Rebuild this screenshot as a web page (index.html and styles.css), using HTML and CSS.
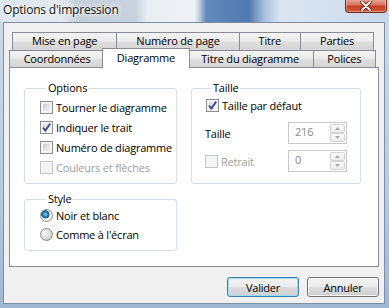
FILE: index.html
```html
<!DOCTYPE html>
<html lang="fr">
<head>
    <meta charset="UTF-8">
    <meta name="viewport" content="width=device-width, initial-scale=1.0">
    <title>Options d'impression</title>
    <link rel="stylesheet" href="styles.css">
</head>
<body>
    <div class="window">
        <div class="titlebar">
            <span class="title">Options d'impression</span>
            <button type="button" class="close">
                <svg width="14" height="10" viewBox="0 0 14 10">
                    <path d="M3 1 L11 9 M11 1 L3 9" stroke="#4a1a12" stroke-width="3.4" stroke-linecap="round"/>
                    <path d="M3 1 L11 9 M11 1 L3 9" stroke="#ffffff" stroke-width="1.8" stroke-linecap="round"/>
                </svg>
            </button>
        </div>

        <div class="client">
            <div class="tabs">
                <div class="tab-row back">
                    <div class="tab">Mise en page</div>
                    <div class="tab">Numéro de page</div>
                    <div class="tab">Titre</div>
                    <div class="tab">Parties</div>
                </div>
                <div class="tab-row front">
                    <div class="tab">Coordonnées</div>
                    <div class="tab selected">Diagramme</div>
                    <div class="tab">Titre du diagramme</div>
                    <div class="tab">Polices</div>
                </div>
            </div>

            <div class="panel">
                <div class="left-col">
                    <fieldset class="group options">
                        <legend>Options</legend>
                        <label class="check-row"><span class="box"></span>Tourner le diagramme</label>
                        <label class="check-row"><span class="box checked"><svg width="11" height="11" viewBox="0 0 11 11"><path d="M2 5.5 L4.3 8.6 L9.2 1.6" fill="none" stroke="#3b4f8a" stroke-width="1.9"/></svg></span>Indiquer le trait</label>
                        <label class="check-row"><span class="box"></span>Numéro de diagramme</label>
                        <label class="check-row disabled"><span class="box"></span>Couleurs et flèches</label>
                    </fieldset>

                    <fieldset class="group style">
                        <legend>Style</legend>
                        <label class="radio-row"><span class="radio on"></span>Noir et blanc</label>
                        <label class="radio-row"><span class="radio"></span>Comme à l'écran</label>
                    </fieldset>
                </div>

                <fieldset class="group taille">
                    <legend>Taille</legend>
                    <label class="check-row"><span class="box checked"><svg width="11" height="11" viewBox="0 0 11 11"><path d="M2 5.5 L4.3 8.6 L9.2 1.6" fill="none" stroke="#3b4f8a" stroke-width="1.9"/></svg></span>Taille par défaut</label>
                    <div class="field-row">
                        <span class="field-label">Taille</span>
                        <div class="spin">
                            <span class="spin-value">216</span>
                            <div class="spin-btns">
                                <span class="spin-btn"><svg width="5" height="3" viewBox="0 0 5 3"><path d="M0 3 L2.5 0 L5 3 Z" fill="#a8a8a8"/></svg></span>
                                <span class="spin-btn"><svg width="5" height="3" viewBox="0 0 5 3"><path d="M0 0 L2.5 3 L5 0 Z" fill="#a8a8a8"/></svg></span>
                            </div>
                        </div>
                    </div>
                    <div class="field-row">
                        <label class="check-row disabled"><span class="box"></span>Retrait</label>
                        <div class="spin">
                            <span class="spin-value">0</span>
                            <div class="spin-btns">
                                <span class="spin-btn"><svg width="5" height="3" viewBox="0 0 5 3"><path d="M0 3 L2.5 0 L5 3 Z" fill="#a8a8a8"/></svg></span>
                                <span class="spin-btn"><svg width="5" height="3" viewBox="0 0 5 3"><path d="M0 0 L2.5 3 L5 0 Z" fill="#a8a8a8"/></svg></span>
                            </div>
                        </div>
                    </div>
                </fieldset>
            </div>

            <div class="buttons">
                <button type="button" class="btn default">Valider</button>
                <button type="button" class="btn">Annuler</button>
            </div>
        </div>
    </div>
</body>
</html>
```

FILE: styles.css
```css
* {
    box-sizing: border-box;
}

body {
    margin: 0;
    font-family: "Open Sans", "Noto Sans", sans-serif;
    font-size: 11px;
    letter-spacing: -0.2px;
    color: #000;
}

.window {
    width: 389px;
    height: 308px;
    display: flex;
    flex-direction: column;
    overflow: hidden;
    background: linear-gradient(180deg, #cfdcea 0%, #b8cbe0 60%, #9fb7d3 100%);
}

/* title bar (aero glass) */
.titlebar {
    height: 22px;
    display: flex;
    justify-content: space-between;
    align-items: flex-start;
    background: linear-gradient(90deg, #dde5ee 0%, #e3e9f0 16%, #c5cfdb 20%, #c9d3de 35%, #e9eef4 38%, #eef2f6 50%, #c9d6e6 51%, #6489bb 53%, #5079b0 64%, #aac0dc 68%, #dbe5f0 72%, #d2dfee 88%, #c8d7e9 100%);
}

.title {
    padding: 2px 0 0 3px;
    font-size: 12px;
    line-height: 15px;
    color: #111;
    text-shadow: 0 0 4px #fff, 0 0 6px #fff;
}

.close {
    width: 42px;
    height: 14px;
    margin: -1px 2px 0 0;
    padding: 0;
    border: 1px solid #6b2b20;
    border-top: none;
    border-radius: 0 0 4px 4px;
    background: linear-gradient(180deg, #e9a99b 0%, #d8755f 45%, #c53e24 55%, #d45a3c 100%);
    box-shadow: inset 0 0 0 1px rgba(255, 255, 255, 0.35);
    display: flex;
    align-items: center;
    justify-content: center;
}

/* client area */
.client {
    flex: 1;
    margin: 0 4px 4px 3px;
    padding: 9px 5px 0 5px;
    background: #f0f0f0;
    border: 1px solid #7d8ea3;
    display: flex;
    flex-direction: column;
}

.tab-row {
    display: flex;
}

.tab-row.back {
    height: 18px;
    margin: 0 5px 0 3px;
}

.tab-row.front {
    height: 17px;
    margin: 0 3px 0 0;
}

.tab {
    flex: 1 1 auto;
    padding: 0 12px;
    border: 1px solid #898c95;
    border-bottom: none;
    background: linear-gradient(180deg, #f3f3f3 0%, #ebebeb 45%, #dedede 55%, #d4d4d4 100%);
    text-align: center;
    white-space: nowrap;
    line-height: 16px;
}

.tab + .tab {
    margin-left: -1px;
}

.tab.selected {
    position: relative;
    z-index: 1;
    height: 20px;
    margin: -2px -2px -1px -3px;
    background: #fff;
    line-height: 17px;
}

.panel {
    height: 200px;
    padding: 13px 0 0 14px;
    background: #fff;
    border: 1px solid #898c95;
    display: flex;
    align-items: flex-start;
    gap: 14px;
}

.left-col {
    display: flex;
    flex-direction: column;
    gap: 8px;
}

.group {
    margin: 0;
    min-width: 0;
    border: 1px solid #d5dfe5;
    border-radius: 3px;
}

.group legend {
    margin-left: 6px;
    padding: 0 2px;
    line-height: 14px;
}

.options {
    width: 153px;
    padding: 2px 0 6px 15px;
}

.style {
    width: 153px;
    padding: 0 0 6px 15px;
}

.taille {
    width: 170px;
    padding: 1px 13px 11px 13px;
}

.check-row, .radio-row {
    display: flex;
    align-items: center;
    gap: 3px;
    height: 20px;
    white-space: nowrap;
}

.radio-row {
    height: 19px;
}

.taille > .check-row {
    height: 18px;
    padding-left: 1px;
}

.disabled {
    color: #a0a0a0;
}

/* checkbox */
.box {
    width: 13px;
    height: 13px;
    flex: none;
    border: 1px solid #8e8f8f;
    background: linear-gradient(135deg, #b9bdc2 0%, #e4e5e7 55%, #f7f7f7 100%);
    box-shadow: inset 0 0 0 2px #f3f3f3;
    display: flex;
    align-items: center;
    justify-content: center;
}

.box.checked {
    background: linear-gradient(135deg, #c8ccd1 0%, #eceef0 55%, #fafafa 100%);
}

.disabled .box {
    border-color: #c4c4c4;
    background: #f4f4f4;
    box-shadow: none;
}

/* radio */
.radio {
    width: 13px;
    height: 13px;
    flex: none;
    border: 1px solid #8e8f8f;
    border-radius: 50%;
    background: radial-gradient(circle at 35% 35%, #fbfbfb 0%, #e2e2e2 45%, #c9c9c9 75%, #f4f4f4 78%);
}

.radio.on {
    background: radial-gradient(circle at 40% 40%, #8fd3f5 0%, #2b83bd 25%, #164f7c 42%, #f4f4f4 46%, #e6e6e6 100%);
}

/* spin boxes */
.field-row {
    display: flex;
    align-items: center;
    justify-content: space-between;
    margin-top: 6px;
}

.taille > .check-row + .field-row {
    margin-top: 8px;
}

.spin {
    width: 59px;
    height: 22px;
    display: flex;
    border: 1px solid #c9c9c9;
    background: #fff;
}

.spin-value {
    flex: 1;
    padding: 1px 0 0 6px;
    color: #8a8a8a;
    line-height: 16px;
}

.spin-btns {
    width: 16px;
    padding: 1px 1px 1px 0;
    display: flex;
    flex-direction: column;
}

.spin-btn {
    flex: 1;
    border: 1px solid #d2d2d2;
    border-radius: 2px;
    background: linear-gradient(180deg, #fbfbfb 0%, #ececec 100%);
    display: flex;
    align-items: center;
    justify-content: center;
}

/* dialog buttons */
.buttons {
    display: flex;
    justify-content: flex-end;
    gap: 8px;
    margin-top: 10px;
}

.btn {
    width: 72px;
    height: 20px;
    padding: 0;
    border: 1px solid #707070;
    border-radius: 3px;
    background: linear-gradient(180deg, #f2f2f2 0%, #ebebeb 48%, #dddddd 52%, #cfcfcf 100%);
    box-shadow: inset 0 0 0 1px #fbfbfb;
    font-family: inherit;
    font-size: 11px;
    letter-spacing: inherit;
    color: #000;
}

.btn.default {
    border-color: #3c7fb1;
    box-shadow: inset 0 0 0 1px #9fdcf6;
}
```
